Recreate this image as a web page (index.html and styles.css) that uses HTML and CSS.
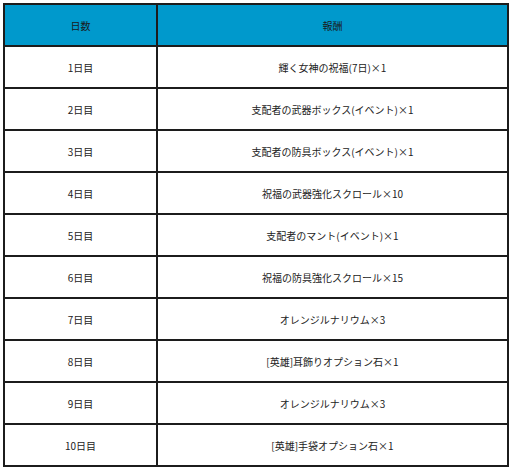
FILE: index.html
```
<!DOCTYPE html>
<html lang="ja">
<head>
<meta charset="utf-8">
<link rel="stylesheet" href="styles.css">
</head>
<body>
<table class="reward">
<thead>
<tr><th class="day">日数</th><th>報酬</th></tr>
</thead>
<tbody>
<tr><td>1日目</td><td>輝く女神の祝福(7日)×1</td></tr>
<tr><td>2日目</td><td>支配者の武器ボックス(イベント)×1</td></tr>
<tr><td>3日目</td><td>支配者の防具ボックス(イベント)×1</td></tr>
<tr><td>4日目</td><td>祝福の武器強化スクロール×10</td></tr>
<tr><td>5日目</td><td>支配者のマント(イベント)×1</td></tr>
<tr><td>6日目</td><td>祝福の防具強化スクロール×15</td></tr>
<tr><td>7日目</td><td>オレンジルナリウム×3</td></tr>
<tr><td>8日目</td><td>[英雄]耳飾りオプション石×1</td></tr>
<tr><td>9日目</td><td>オレンジルナリウム×3</td></tr>
<tr><td>10日目</td><td>[英雄]手袋オプション石×1</td></tr>
</tbody>
</table>
</body>
</html>
```
FILE: styles.css
```
html, body {
  margin: 0;
  padding: 0;
  background: #ffffff;
}
body {
  padding: 3px;
  font-family: "Noto Sans CJK JP", "Liberation Sans", sans-serif;
  font-size: 10px;
  color: #222;
}
.reward {
  border-collapse: collapse;
  width: 506px;
  table-layout: fixed;
}
.reward th, .reward td {
  border: 2px solid #1c1c1c;
  height: 40px;
  padding: 0;
  text-align: center;
  vertical-align: middle;
  font-weight: normal;
}
.reward th {
  background: #0099cc;
  color: #1a1a1a;
}
.reward th.day {
  width: 151px;
}
```
